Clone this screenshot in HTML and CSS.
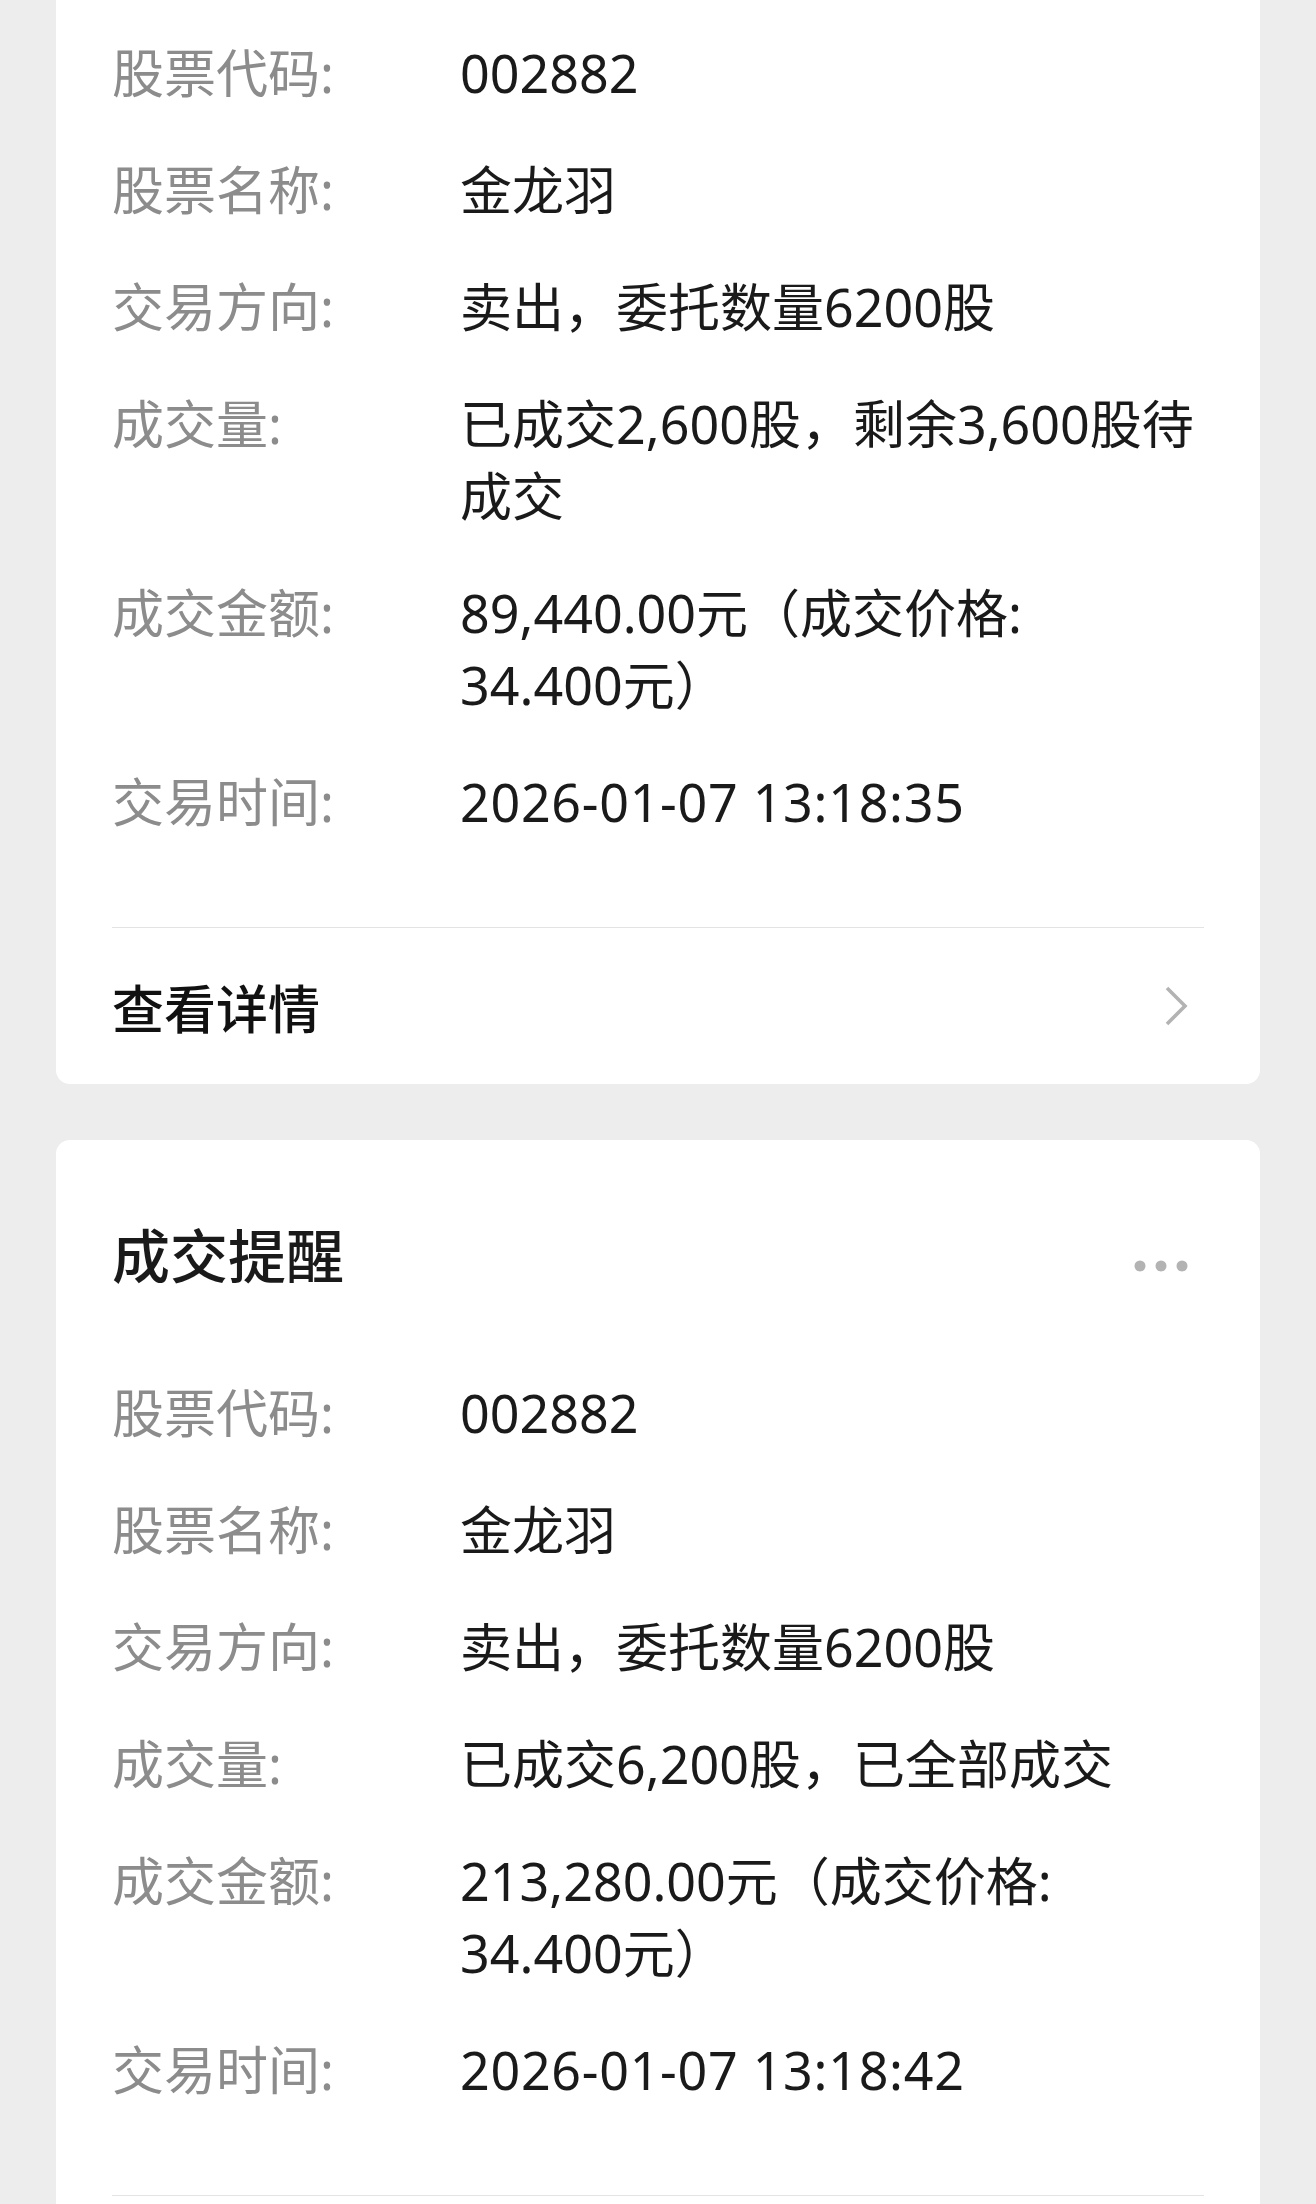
FILE: index.html
```html
<!DOCTYPE html>
<html lang="zh-CN">
<head>
<meta charset="utf-8">
<title>成交提醒</title>
<link rel="stylesheet" href="styles.css">
</head>
<body>
<div class="screen">
  <section class="card card-cut">
    <div class="rows">
      <div class="row"><div class="label">股票代码:</div><div class="value">002882</div></div>
      <div class="row"><div class="label">股票名称:</div><div class="value">金龙羽</div></div>
      <div class="row"><div class="label">交易方向:</div><div class="value">卖出，委托数量6200股</div></div>
      <div class="row"><div class="label">成交量:</div><div class="value">已成交2,600股，剩余3,600股待<br>成交</div></div>
      <div class="row"><div class="label">成交金额:</div><div class="value">89,440.00元（成交价格:<br>34.400元）</div></div>
      <div class="row"><div class="label">交易时间:</div><div class="value time">2026-01-07 13:18:35</div></div>
    </div>
    <div class="divider"></div>
    <div class="footer">
      <span class="footer-text">查看详情</span>
      <svg class="chevron" width="24" height="40" viewBox="0 0 24 40"><polyline points="3,2 21,20 3,38" fill="none" stroke="#b3b3b3" stroke-width="3.6" stroke-linejoin="miter"/></svg>
    </div>
  </section>

  <section class="card">
    <div class="header">
      <h2 class="title">成交提醒</h2>
      <svg class="dots" width="54" height="12" viewBox="0 0 54 12"><circle cx="6" cy="6" r="5.5" fill="#b3b3b3"/><circle cx="27" cy="6" r="5.5" fill="#b3b3b3"/><circle cx="48" cy="6" r="5.5" fill="#b3b3b3"/></svg>
    </div>
    <div class="rows">
      <div class="row"><div class="label">股票代码:</div><div class="value">002882</div></div>
      <div class="row"><div class="label">股票名称:</div><div class="value">金龙羽</div></div>
      <div class="row"><div class="label">交易方向:</div><div class="value">卖出，委托数量6200股</div></div>
      <div class="row"><div class="label">成交量:</div><div class="value">已成交6,200股，已全部成交</div></div>
      <div class="row"><div class="label">成交金额:</div><div class="value">213,280.00元（成交价格:<br>34.400元）</div></div>
      <div class="row"><div class="label">交易时间:</div><div class="value time">2026-01-07 13:18:42</div></div>
    </div>
    <div class="divider"></div>
    <div class="footer-space"></div>
  </section>
</div>
</body>
</html>
```

FILE: styles.css
```css
html, body {
  margin: 0;
  padding: 0;
  background: #ededed;
}

body {
  font-family: "Noto Sans", "Noto Sans CJK SC", sans-serif;
  color: #1a1a1a;
}

.screen {
  height: 2204px;
  overflow: hidden;
  padding: 0 56px;
  box-sizing: border-box;
}

.card {
  background: #ffffff;
  border-radius: 14px;
  padding: 76px 56px 0;
  margin-bottom: 56px;
}

.card-cut {
  border-radius: 0 0 14px 14px;
  padding-top: 37px;
}

.header {
  display: flex;
  justify-content: space-between;
  align-items: center;
  height: 80px;
  margin-bottom: 81px;
}

.title {
  margin: 0;
  font-size: 58px;
  line-height: 80px;
  font-weight: 500;
  color: #1a1a1a;
}

.dots {
  margin-right: 16px;
  margin-top: 20px;
}

.rows {
  display: flex;
  flex-direction: column;
  gap: 45px;
}

.row {
  display: grid;
  grid-template-columns: 348px 1fr;
  font-size: 52px;
  line-height: 72px;
}

.label {
  color: #8c8c8c;
}

.value {
  color: #1a1a1a;
}

.time {
  letter-spacing: 0.7px;
}

.divider {
  height: 1px;
  background: #e3e3e3;
  margin-top: 89px;
}

.footer {
  height: 156px;
  display: flex;
  align-items: center;
  justify-content: space-between;
}

.footer-space {
  height: 156px;
}

.footer-text {
  font-size: 52px;
  font-weight: 500;
  color: #111111;
}

.chevron {
  margin-right: 16px;
}
```
